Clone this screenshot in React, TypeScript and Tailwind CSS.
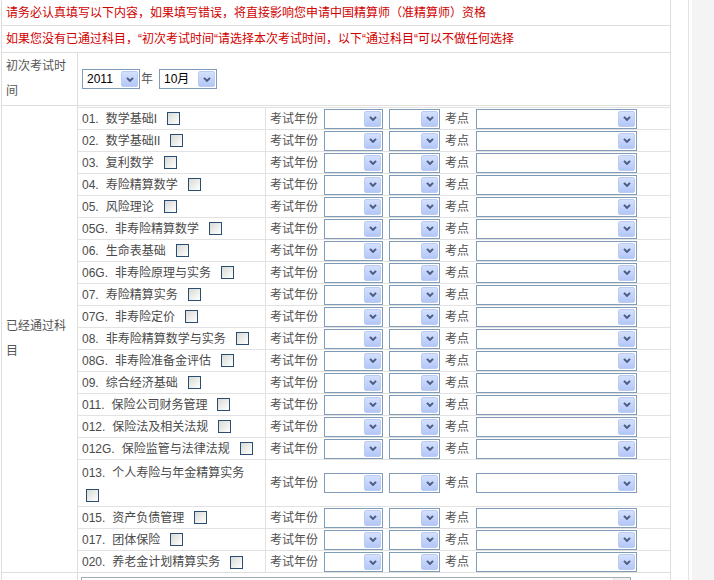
import React from "react";

type Subject = { code: string; name: string; wrap?: boolean };

const subjects: Subject[] = [
  { code: "01.", name: "数学基础I" },
  { code: "02.", name: "数学基础II" },
  { code: "03.", name: "复利数学" },
  { code: "04.", name: "寿险精算数学" },
  { code: "05.", name: "风险理论" },
  { code: "05G.", name: "非寿险精算数学" },
  { code: "06.", name: "生命表基础" },
  { code: "06G.", name: "非寿险原理与实务" },
  { code: "07.", name: "寿险精算实务" },
  { code: "07G.", name: "非寿险定价" },
  { code: "08.", name: "非寿险精算数学与实务" },
  { code: "08G.", name: "非寿险准备金评估" },
  { code: "09.", name: "综合经济基础" },
  { code: "011.", name: "保险公司财务管理" },
  { code: "012.", name: "保险法及相关法规" },
  { code: "012G.", name: "保险监管与法律法规" },
  { code: "013.", name: "个人寿险与年金精算实务", wrap: true },
  { code: "015.", name: "资产负债管理" },
  { code: "017.", name: "团体保险" },
  { code: "020.", name: "养老金计划精算实务" },
];

const Chevron = () => (
  <svg width="8" height="5" viewBox="0 0 8 5">
    <path d="M1 0.9 L4 3.9 L7 0.9" stroke="#4b5c80" strokeWidth="2" fill="none" />
  </svg>
);

const Select = ({ className, value }: { className: string; value?: string }) => (
  <div className={`flex h-[20px] shrink-0 items-center border border-[#7f9db9] bg-white ${className}`}>
    <span className="flex-1 pl-[4px] text-[12px] leading-none text-black">{value}</span>
    <span className="mr-px flex h-[16px] w-[17px] items-center justify-center rounded-[2px] border border-[#bccbf1] bg-linear-to-b from-[#d4e0fd] to-[#b3c7f7]">
      <Chevron />
    </span>
  </div>
);

const Checkbox = ({ className = "" }: { className?: string }) => (
  <span
    className={`inline-block h-[13px] w-[13px] shrink-0 border border-[#2a4d73] bg-linear-to-br from-[#d9d9d3] to-[#ffffff] ${className}`}
  />
);

const SubjectRow = ({ s, last }: { s: Subject; last: boolean }) => (
  <div
    className={`flex ${s.wrap ? "h-[47px]" : "h-[22px]"} ${last ? "" : "border-b border-[#e2e2e2]"}`}
  >
    <div className="w-[188px] shrink-0 border-r border-[#e2e2e2] pl-[4px] text-[#4a4a4a]">
      {s.wrap ? (
        <>
          <div className="flex h-[25px] items-center">
            <span>{s.code}</span>
            <span className="ml-[7px]">{s.name}</span>
          </div>
          <div className="flex h-[20px] items-center">
            <Checkbox className="ml-[4px]" />
          </div>
        </>
      ) : (
        <div className="flex h-full items-center">
          <span>{s.code}</span>
          <span className="ml-[7px]">{s.name}</span>
          <Checkbox className="ml-[10px]" />
        </div>
      )}
    </div>
    <div className="flex flex-1 items-center pl-[4px] text-[#505050]">
      <span>考试年份</span>
      <Select className="ml-[6px] w-[59px]" />
      <Select className="ml-[6px] w-[51px]" />
      <span className="ml-[5px]">考点</span>
      <Select className="ml-[7px] w-[161px]" />
    </div>
  </div>
);

export default function App() {
  return (
    <div className="flex h-[580px] w-[714px] overflow-hidden bg-white font-['Liberation_Sans','Noto_Sans_CJK_SC',sans-serif] text-[12px] leading-[20px]">
      <div className="w-[688px] shrink-0">
        <div className="ml-px w-[670px] border-x border-[#dedede]">
          <div className="flex h-[26px] items-center border-b border-[#dedede] pl-[4px] text-[#d10000]">
            请务必认真填写以下内容，如果填写错误，将直接影响您申请中国精算师（准精算师）资格
          </div>
          <div className="flex h-[27px] items-center border-b border-[#dedede] pl-[4px] text-[#d10000]">
            如果您没有已通过科目，“初次考试时间“请选择本次考试时间，以下“通过科目“可以不做任何选择
          </div>
          <div className="flex h-[53px] border-b border-[#dedede]">
            <div className="flex w-[76px] shrink-0 items-center border-r border-[#dedede] pl-[4px] pr-[8px] leading-[25px] text-[#555]">
              初次考试时间
            </div>
            <div className="flex flex-1 items-center pl-[4px] text-[#555]">
              <Select className="w-[58px]" value="2011" />
              <span className="ml-px">年</span>
              <Select className="ml-[6px] w-[58px]" value="10月" />
            </div>
          </div>
          <div className="flex h-[467px] border-b border-[#dedede]">
            <div className="flex w-[76px] shrink-0 items-center border-r border-[#dedede] pl-[4px] pr-[8px] leading-[25px] text-[#555]">
              已经通过科目
            </div>
            <div className="flex-1 pt-px">
              <div className="border-t border-[#e2e2e2]">
                {subjects.map((s, i) => (
                  <SubjectRow key={s.code} s={s} last={i === subjects.length - 1} />
                ))}
              </div>
            </div>
          </div>
          <div className="flex h-[40px]">
            <div className="w-[76px] shrink-0 border-r border-[#dedede]" />
            <div className="flex-1 pl-[3px] pt-[4px]">
              <div className="flex h-[40px] w-[550px] border border-[#a3abb6] bg-white">
                <div className="ml-[93px] mt-[2px] h-[20px] w-[167px] rounded-[3px] border border-[#e4e4e4]" />
                <div className="ml-auto w-[17px] border-l border-[#e6e6e6] bg-[#f1f1f1]" />
              </div>
            </div>
          </div>
        </div>
      </div>
      <div className="w-px bg-[#e3e3e3]" />
      <div className="w-[3px] bg-white" />
      <div className="flex-1 bg-[#f4f4f4]" />
    </div>
  );
}
